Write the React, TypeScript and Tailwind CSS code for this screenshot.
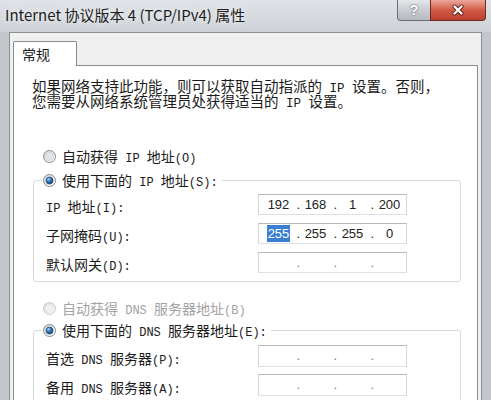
import React from "react";

function L({ children }: { children: React.ReactNode }) {
  return <span className="font-['Liberation_Mono',monospace] text-[12px] leading-[0]">{children}</span>;
}

function LD({ children }: { children: React.ReactNode }) {
  return <span className="font-['Liberation_Mono',monospace] text-[12.5px] leading-[0]">{children}</span>;
}

function Radio({ checked = false, disabled = false }: { checked?: boolean; disabled?: boolean }) {
  return (
    <svg width="13" height="13" viewBox="0 0 13 13" className="shrink-0">
      <defs>
        <linearGradient id="rb-outer" x1="0" y1="0" x2="1" y2="1">
          <stop offset="0" stopColor="#d4d6d9" />
          <stop offset="1" stopColor="#ffffff" />
        </linearGradient>
        <radialGradient id="rb-dot" cx="0.35" cy="0.3" r="0.8">
          <stop offset="0" stopColor="#b5dbff" />
          <stop offset="0.45" stopColor="#3474bd" />
          <stop offset="1" stopColor="#123a6b" />
        </radialGradient>
      </defs>
      <circle cx="6.5" cy="6.5" r="6" fill="url(#rb-outer)" stroke={disabled ? "#c9cbce" : "#878a8f"} />
      <circle cx="6.5" cy="6.5" r="4" fill={disabled ? "#f1f1f1" : "#e4e5e7"} stroke={disabled ? "#e0e0e0" : "#c9cbce"} strokeWidth="0.6" />
      {checked && <circle cx="6.5" cy="6.5" r="3.4" fill="url(#rb-dot)" stroke="#1a406f" strokeWidth="0.7" />}
    </svg>
  );
}

function RadioRow({ checked, disabled, children }: { checked?: boolean; disabled?: boolean; children: React.ReactNode }) {
  return (
    <div className={`flex items-center h-[20px] gap-[6px] whitespace-nowrap ${disabled ? "text-[#a3a3a3]" : "text-[#1b1b1b]"}`}>
      <Radio checked={checked} disabled={disabled} />
      <span className="leading-[20px]">{children}</span>
    </div>
  );
}

function IpBox({ parts, highlight = false, h }: { parts: string[]; highlight?: boolean; h: string }) {
  const empty = parts.every((p) => p === "");
  return (
    <div
      className={`w-[149px] ${h} bg-white border border-[#b5b8be] border-l-[#d3d6db] border-r-[#d3d6db] border-b-[#dde1e6] flex items-center pl-[4px] font-['Liberation_Sans',sans-serif] text-[13px] ${empty ? "text-[#777]" : "text-[#222]"}`}
    >
      {[0, 1, 2, 3].map((i) => (
        <React.Fragment key={i}>
          <div className="w-[31px] flex justify-center">
            {highlight && i === 0 ? (
              <span className="inline-block bg-[#3a7fd1] text-white px-[1px] leading-[17px]">{parts[i]}</span>
            ) : (
              <span>{parts[i]}</span>
            )}
          </div>
          {i < 3 && <div className="w-[6px] flex justify-end">.</div>}
        </React.Fragment>
      ))}
    </div>
  );
}

function FieldRow({ label, children, h }: { label: React.ReactNode; children: React.ReactNode; h: string }) {
  return (
    <div className={`flex items-center ${h}`}>
      <span className="ml-[4px] w-[212px] whitespace-nowrap text-[#1b1b1b] pt-[3px] leading-[20px]">{label}</span>
      {children}
    </div>
  );
}

export default function App() {
  return (
    <div className="w-[491px] h-[400px] overflow-hidden flex flex-col bg-[#c3c6ca] font-['Noto_Sans_CJK_SC',sans-serif] text-[14px]">
      {/* Title bar */}
      <div className="h-[32px] shrink-0 flex justify-between bg-gradient-to-b from-[#e0e3e7] to-[#cdd1d6]">
        <div className="pl-[5px] pt-[5px] leading-[20px] text-[15px] text-[#1e1e1e] whitespace-nowrap [text-shadow:0_0_6px_#ffffff]">
          Internet 协议版本 4 (TCP/IPv4) 属性
        </div>
        <div className="flex h-[21px] mr-[5px]">
          <div className="w-[33px] h-full flex items-center justify-center rounded-bl-[4px] border border-t-0 border-r-0 border-[#6a6f76] bg-gradient-to-b from-[#e6e8eb] via-[#c9ccd1] to-[#b7bbc1] text-white font-bold text-[14px] font-['Liberation_Sans',sans-serif] [text-shadow:0_0_2px_#3f444a]">
            ?
          </div>
          <div className="w-[56px] h-full flex items-center justify-center rounded-br-[4px] border border-t-0 border-[#6e2a20] bg-gradient-to-b from-[#e9a79b] via-[#d15a47] to-[#b9402e]">
            <svg width="14" height="12" viewBox="0 0 14 12">
              <path d="M3.5 2.5 L10.5 9.5 M10.5 2.5 L3.5 9.5" stroke="#5a1d15" strokeWidth="4" strokeLinecap="round" />
              <path d="M3.5 2.5 L10.5 9.5 M10.5 2.5 L3.5 9.5" stroke="#ffffff" strokeWidth="2.4" strokeLinecap="round" />
            </svg>
          </div>
        </div>
      </div>

      {/* Client area */}
      <div className="flex-1 min-h-0 ml-[9px] mr-[9px] border border-b-0 border-[#8b9096] bg-[#f0f0f0] pl-[3px] pr-[3px] pt-[8px] flex flex-col">
        <div className="relative z-10 w-[64px] h-[25px] shrink-0 bg-white border border-b-0 border-[#898c95] rounded-t-[2px] pl-[8px] flex items-center text-[#1b1b1b] leading-[20px]">
          常规
        </div>
        <div className="-mt-[1px] flex-1 bg-white border border-[#898c95] pl-[18px] pt-[12px] flex flex-col">
          <div className="text-[14.5px] text-[#1b1b1b] whitespace-nowrap">
            <div className="h-[15px] leading-[15px]">
              如果网络支持此功能，则可以获取自动指派的<LD> IP </LD>设置。否则，
            </div>
            <div className="h-[15px] leading-[15px]">
              您需要从网络系统管理员处获得适当的<LD> IP </LD>设置。
            </div>
          </div>

          <div className="mt-[38px] ml-[11px]">
            <RadioRow>
              自动获得<L> IP </L>地址<L>(O)</L>
            </RadioRow>
          </div>

          <fieldset className="mt-[4px] ml-[1px] w-[428px] border border-[#d6dadf] rounded-[3px] pl-[8px] pr-[8px] pt-[4px] pb-[8px]">
            <legend className="pl-[1px] pr-[4px]">
              <RadioRow checked>
                使用下面的<L> IP </L>地址<L>(S):</L>
              </RadioRow>
            </legend>
            <div className="flex flex-col gap-[8px]">
              <FieldRow h="h-[21px]" label={<><L>IP </L>地址<L>(I):</L></>}>
                <IpBox h="h-[21px]" parts={["192", "168", "1", "200"]} />
              </FieldRow>
              <FieldRow h="h-[21px]" label={<>子网掩码<L>(U):</L></>}>
                <IpBox h="h-[21px]" parts={["255", "255", "255", "0"]} highlight />
              </FieldRow>
              <FieldRow h="h-[21px]" label={<>默认网关<L>(D):</L></>}>
                <IpBox h="h-[21px]" parts={["", "", "", ""]} />
              </FieldRow>
            </div>
          </fieldset>

          <div className="mt-[16px] ml-[11px]">
            <RadioRow disabled>
              自动获得<L> DNS </L>服务器地址<L>(B)</L>
            </RadioRow>
          </div>

          <fieldset className="mt-[2px] ml-[1px] w-[428px] border border-[#d6dadf] rounded-[3px] pl-[8px] pr-[8px] pt-[5px] pb-[8px]">
            <legend className="pl-[1px] pr-[4px]">
              <RadioRow checked>
                使用下面的<L> DNS </L>服务器地址<L>(E):</L>
              </RadioRow>
            </legend>
            <div className="flex flex-col gap-[7px]">
              <FieldRow h="h-[22px]" label={<>首选<L> DNS </L>服务器<L>(P):</L></>}>
                <IpBox h="h-[22px]" parts={["", "", "", ""]} />
              </FieldRow>
              <FieldRow h="h-[22px]" label={<>备用<L> DNS </L>服务器<L>(A):</L></>}>
                <IpBox h="h-[22px]" parts={["", "", "", ""]} />
              </FieldRow>
            </div>
          </fieldset>
        </div>
      </div>
    </div>
  );
}
